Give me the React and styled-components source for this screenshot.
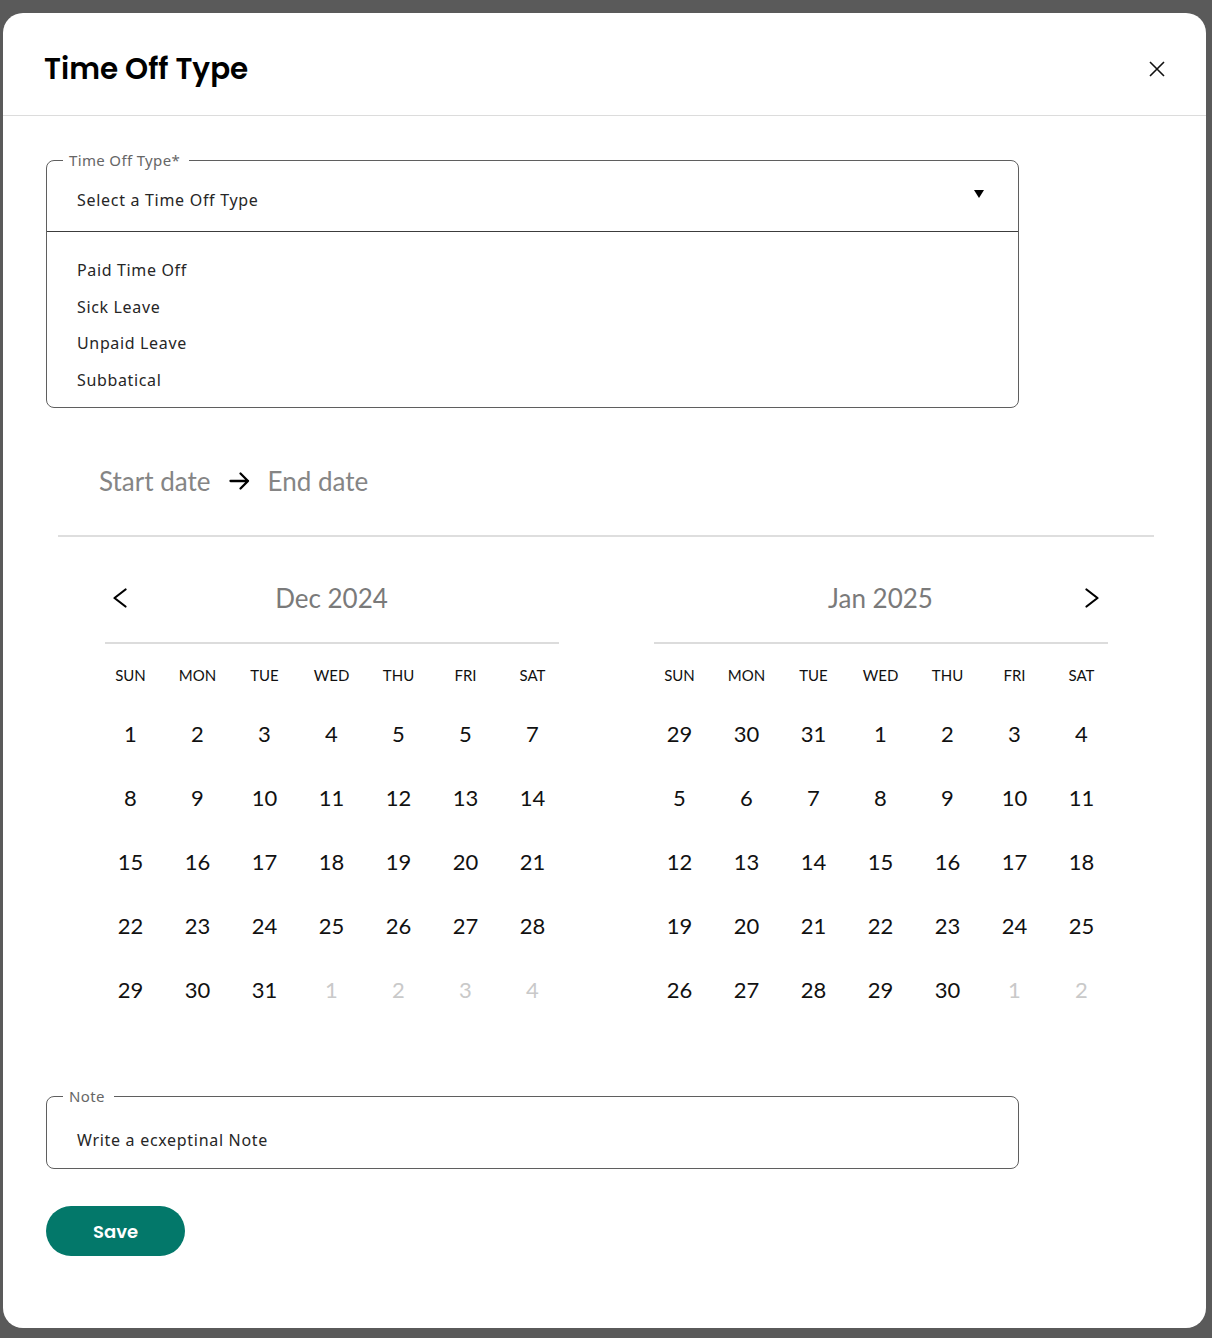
import React from 'react';
import styled, { createGlobalStyle } from 'styled-components';

const Global = createGlobalStyle`
  html, body { margin: 0; padding: 0; background: #5a5a5a; }
  * { box-sizing: border-box; }
`;

const Backdrop = styled.div`
  padding: 13px 6px 10px 3px;
`;

const Modal = styled.div`
  background: #fff;
  border-radius: 20px;
  overflow: hidden;
`;

const Header = styled.header`
  height: 103px;
  display: flex;
  align-items: center;
  justify-content: space-between;
  padding: 9px 41px 0 41px;
  border-bottom: 1px solid #dcdcdc;
`;

const Title = styled.h1`
  margin: 0;
  font-family: Poppins, "Open Sans", sans-serif;
  font-weight: 600;
  font-size: 29.4px;
  color: #000;
`;

const CloseButton = styled.button`
  border: 0;
  background: none;
  padding: 0;
  width: 16px;
  height: 16px;
  display: flex;
  cursor: pointer;
`;

const Body = styled.div`
  padding: 35px 0 72px 43px;
`;

const Field = styled.fieldset`
  margin: 0;
  padding: 0;
  width: 973px;
  border: 1px solid #5f5f5f;
  border-radius: 8px;
  margin-top: ${p => p.$mt || 0}px;
`;

const Legend = styled.legend`
  margin-left: 16px;
  padding: 0 9px 0 6px;
  font-family: "Noto Sans", sans-serif;
  font-size: 15px;
  line-height: 18px;
  letter-spacing: 0.35px;
  color: #666;
`;

const SelectRow = styled.div`
  height: 63px;
  display: flex;
  align-items: center;
  justify-content: space-between;
  padding: ${p => p.$top || 0}px 34px 0 30px;
  border-bottom: ${p => (p.$divided ? '1px solid #3c3c3c' : '0')};
  font-family: "Noto Sans", sans-serif;
  font-size: 16px;
  letter-spacing: 0.7px;
  color: #262626;
`;

const Caret = styled.span`
  width: 0;
  height: 0;
  border-left: 5px solid transparent;
  border-right: 5px solid transparent;
  border-top: 8px solid #000;
  margin-top: -12px;
`;

const OptionList = styled.ul`
  list-style: none;
  margin: 0;
  padding: 20px 0 9px;
`;

const Option = styled.li`
  height: 36.5px;
  display: flex;
  align-items: center;
  padding-left: 30px;
  font-family: "Noto Sans", sans-serif;
  font-size: 16px;
  letter-spacing: 0.65px;
  color: #262626;
`;

const DateSection = styled.section`
  margin: 0 52px 0 12px;
`;

const DateBar = styled.div`
  margin-top: 57px;
  display: flex;
  align-items: center;
  gap: 18px;
  padding: 0 0 38px 41px;
  height: 72px;
  border-bottom: 2px solid #dedede;
  font-family: Lato, sans-serif;
  font-size: 26px;
  line-height: 32px;
  color: #858585;
`;

const Calendars = styled.div`
  margin-top: 17px;
  display: flex;
  justify-content: center;
  gap: 80px;
`;

const Calendar = styled.div`
  width: 469px;
`;

const MonthHeader = styled.div`
  margin: 0 7.5px;
  height: 90px;
  display: grid;
  grid-template-columns: 40px 1fr 40px;
  align-items: center;
  border-bottom: 2px solid #dcdcdc;
`;

const MonthTitle = styled.div`
  grid-column: 2;
  text-align: center;
  font-family: Lato, sans-serif;
  font-size: 26px;
  color: #7a7a7a;
`;

const NavButton = styled.button`
  border: 0;
  background: none;
  padding: 0;
  display: flex;
  grid-column: ${p => (p.$right ? 3 : 1)};
  justify-content: ${p => (p.$right ? 'flex-end' : 'flex-start')};
  padding-left: ${p => (p.$right ? 0 : 8)}px;
  padding-right: ${p => (p.$right ? 9 : 0)}px;
  cursor: pointer;
`;

const WeekGrid = styled.div`
  display: grid;
  grid-template-columns: repeat(7, 67px);
`;

const DayNames = styled(WeekGrid)`
  margin-top: 19px;
  height: 24px;
  margin-bottom: 14px;
`;

const DayName = styled.div`
  text-align: center;
  font-family: Lato, sans-serif;
  font-size: 15px;
  line-height: 24px;
  color: #111;
`;

const DayCell = styled.div`
  height: 64px;
  display: flex;
  align-items: center;
  justify-content: center;
  font-family: Lato, sans-serif;
  font-size: 22px;
  color: ${p => (p.$muted ? '#c9c9c9' : '#111')};
`;

const SaveButton = styled.button`
  margin-top: 37px;
  width: 139px;
  height: 50px;
  border: 0;
  border-radius: 25px;
  background: #03786a;
  color: #fff;
  font-family: Poppins, "Open Sans", sans-serif;
  font-weight: 600;
  font-size: 18px;
  cursor: pointer;
`;

const Chevron = ({ dir }) => (
  <svg width="14" height="20" viewBox="0 0 14 20" fill="none">
    <polyline
      points={dir === 'left' ? '12.5,1.5 1.5,10 12.5,18.5' : '1.5,1.5 12.5,10 1.5,18.5'}
      stroke="#000"
      strokeWidth="2.2"
      strokeLinecap="round"
      strokeLinejoin="round"
    />
  </svg>
);

const Arrow = () => (
  <svg width="21" height="20" viewBox="0 0 21 20" fill="none">
    <path d="M1.5 10 H19 M11.5 2.5 L19 10 L11.5 17.5" stroke="#000" strokeWidth="2.3" strokeLinecap="round" strokeLinejoin="round" />
  </svg>
);

const CloseIcon = () => (
  <svg width="16" height="16" viewBox="0 0 16 16" fill="none">
    <path d="M1 1 L15 15 M15 1 L1 15" stroke="#111" strokeWidth="1.6" />
  </svg>
);

const DAY_NAMES = ['SUN', 'MON', 'TUE', 'WED', 'THU', 'FRI', 'SAT'];

const m = n => ({ n, muted: true });

const DEC = [
  1, 2, 3, 4, 5, 5, 7,
  8, 9, 10, 11, 12, 13, 14,
  15, 16, 17, 18, 19, 20, 21,
  22, 23, 24, 25, 26, 27, 28,
  29, 30, 31, m(1), m(2), m(3), m(4),
];

const JAN = [
  29, 30, 31, 1, 2, 3, 4,
  5, 6, 7, 8, 9, 10, 11,
  12, 13, 14, 15, 16, 17, 18,
  19, 20, 21, 22, 23, 24, 25,
  26, 27, 28, 29, 30, m(1), m(2),
];

const Month = ({ title, days, nav }) => (
  <Calendar>
    <MonthHeader>
      {nav === 'left' && (
        <NavButton aria-label="Previous month">
          <Chevron dir="left" />
        </NavButton>
      )}
      <MonthTitle>{title}</MonthTitle>
      {nav === 'right' && (
        <NavButton $right aria-label="Next month">
          <Chevron dir="right" />
        </NavButton>
      )}
    </MonthHeader>
    <DayNames>
      {DAY_NAMES.map(d => (
        <DayName key={d}>{d}</DayName>
      ))}
    </DayNames>
    <WeekGrid>
      {days.map((d, i) => {
        const muted = typeof d === 'object';
        return (
          <DayCell key={i} $muted={muted}>
            {muted ? d.n : d}
          </DayCell>
        );
      })}
    </WeekGrid>
  </Calendar>
);

export default function App() {
  return (
    <>
      <Global />
      <Backdrop>
        <Modal>
          <Header>
            <Title>Time Off Type</Title>
            <CloseButton aria-label="Close">
              <CloseIcon />
            </CloseButton>
          </Header>
          <Body>
            <Field>
              <Legend>Time Off Type*</Legend>
              <SelectRow $divided>
                <span>Select a Time Off Type</span>
                <Caret />
              </SelectRow>
              <OptionList>
                <Option>Paid Time Off</Option>
                <Option>Sick Leave</Option>
                <Option>Unpaid Leave</Option>
                <Option>Subbatical</Option>
              </OptionList>
            </Field>

            <DateSection>
              <DateBar>
                <span>Start date</span>
                <Arrow />
                <span>End date</span>
              </DateBar>
              <Calendars>
                <Month title="Dec 2024" days={DEC} nav="left" />
                <Month title="Jan 2025" days={JAN} nav="right" />
              </Calendars>
            </DateSection>

            <Field $mt={66}>
              <Legend>Note</Legend>
              <SelectRow $top={6}>
                <span>Write a ecxeptinal Note</span>
              </SelectRow>
            </Field>

            <SaveButton>Save</SaveButton>
          </Body>
        </Modal>
      </Backdrop>
    </>
  );
}
